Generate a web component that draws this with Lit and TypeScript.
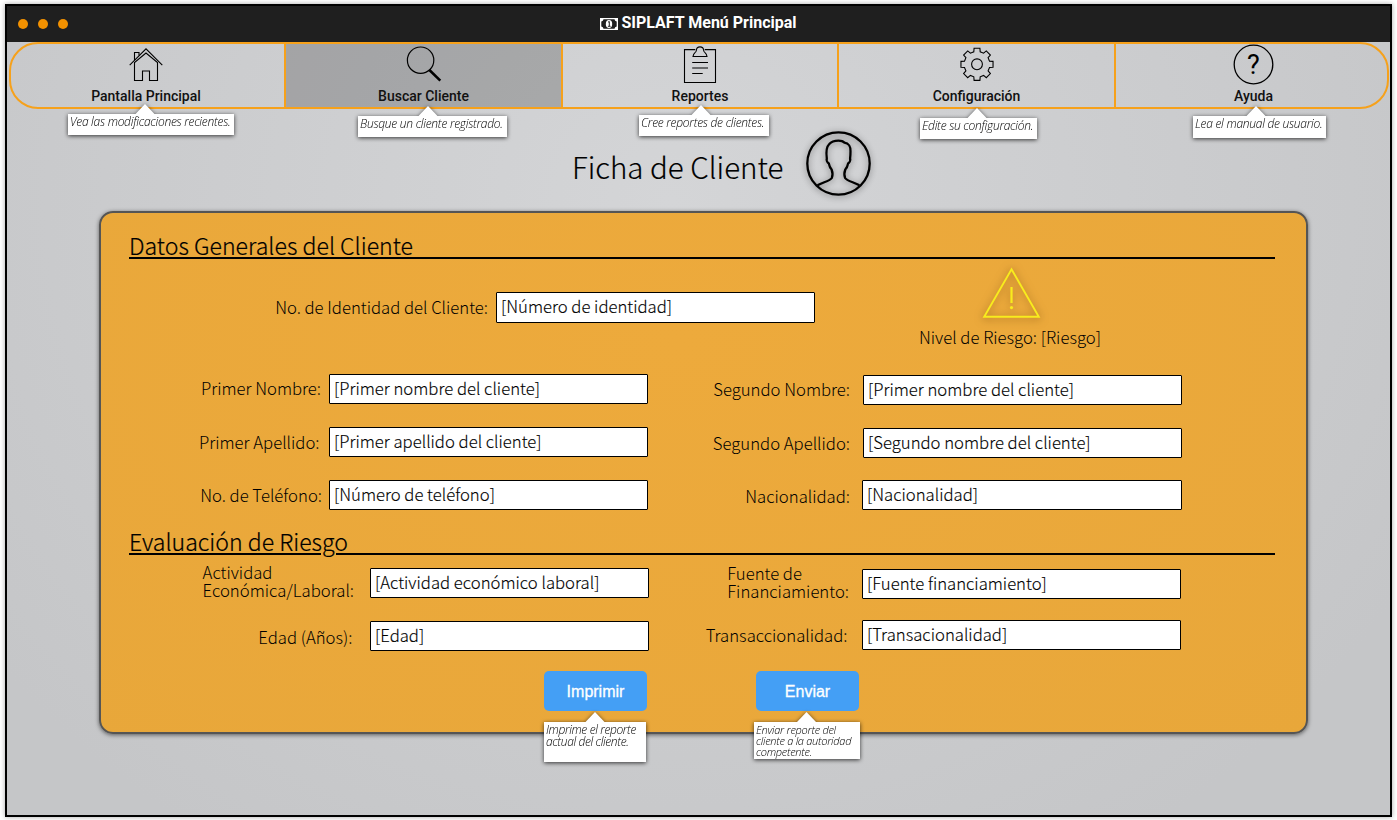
import { LitElement, html, svg, css, TemplateResult } from "lit";
import { customElement, property } from "lit/decorators.js";

function gearPath(cx: number, cy: number, inner: number, outer: number): string {
  const pts: string[] = [];
  for (let i = 0; i < 8; i++) {
    const mid = (i * Math.PI) / 4 - Math.PI / 2;
    const corners: [number, number][] = [
      [inner, -0.25],
      [outer, -0.18],
      [outer, 0.18],
      [inner, 0.25],
    ];
    for (const [r, d] of corners) {
      pts.push(`${(cx + r * Math.cos(mid + d)).toFixed(2)} ${(cy + r * Math.sin(mid + d)).toFixed(2)}`);
    }
  }
  return `M${pts.join("L")}Z`;
}

const icons: Record<string, TemplateResult> = {
  home: svg`<g fill="none" stroke="#000" stroke-width="1.1">
    <path d="M3.7 22.1 20 5.9l16.300 16.200"/><path d="M8.500 19.500V37.500h8v-9.500h7v9.500h8V19.500L20 10Z"/>
    <path d="M8.500 17v-7.500h4.500v3"/></g>`,
  search: svg`<circle cx="16.600" cy="17.200" r="13.200" fill="none" stroke="#000" stroke-width="1.2"/>
    <path d="m25.400 27 10.900 10.600" stroke="#000" stroke-width="2.6"/>`,
  report: svg`<g fill="none" stroke="#000" stroke-width="1.1"><path d="M15.3 6.600H4.5v32.900h31V6.600H24.7"/>
    <path d="M13 13.500q.4-2.600 2-3.900 1.200-.8 1.400-2.400c.2-4.500 7-4.500 7.200 0q.2 1.600 1.400 2.400 1.600 1.300 2 3.900Z"/>
    <path d="M12.200 19.500h15.800M12.200 25h15.800M12.200 30.500h10.500" stroke-width="1.200"/></g>`,
  gear: svg`<g fill="none" stroke="#000" stroke-width="1.1"><path d="${gearPath(20, 21.3, 12.9, 16.3)}"/>
    <circle cx="20" cy="21.3" r="5.4"/></g>`,
  help: svg`<circle cx="19.500" cy="21.500" r="19.300" fill="none" stroke="#000" stroke-width="1.300"/>
    <text x="19.500" y="31" text-anchor="middle" font-family="Roboto" font-size="27" font-weight="400">?</text>`,
};

@customElement("hint-bubble")
class HintBubble extends LitElement {
  @property({ type: Number }) tip = 0;
  static styles = css`
    :host { display: block; box-sizing: border-box; background: #fff; color: #000;
      font: italic 300 12px/12px "Open Sans", sans-serif; letter-spacing: -0.27px; padding: 2px 0 0 2px;
      white-space: nowrap; filter: drop-shadow(0 1px 2px rgba(0, 0, 0, 0.75)); }
    .arrow { position: absolute; top: -10px; width: 20px; height: 10.5px; background: #fff;
      clip-path: polygon(50% 0, 100% 100%, 0 100%); }
  `;
  render() {
    return html`<span class="arrow" style="left:${this.tip - 10}px"></span><slot></slot>`;
  }
}

@customElement("form-field")
class FormField extends LitElement {
  @property() label = "";
  @property() value = "";
  static styles = css`
    :host { display: flex; height: 30px; color: #000; font: 300 16.7px/18px "Noto Sans CJK JP", sans-serif; }
    .label { box-sizing: border-box; width: var(--label, 200px); padding-right: var(--gap, 8px);
      display: flex; justify-content: flex-end; align-items: center; white-space: pre; flex: none;
      padding-top: var(--drop, 0px); padding-bottom: var(--lift, 2px); }
    .box { box-sizing: border-box; flex: none; width: var(--box, 319px); background: #fff; border: 1px solid #000;
      border-radius: 1px; padding: 0 0 var(--rise, 2px) 4px; display: flex; align-items: center;
      white-space: nowrap; -webkit-text-stroke: 0.12px #000; }
  `;
  render() {
    return html`<div class="label"><span>${this.label}</span></div><div class="box"><span>${this.value}</span></div>`;
  }
}

@customElement("app-root")
class AppRoot extends LitElement {
  static styles = css`
    :host { display: block; box-sizing: border-box; width: 1397px; height: 820px; padding: 4px 0 0 5px;
      background: #fff; overflow: hidden; }
    .window { box-sizing: border-box; width: 1387px; height: 813px; border: 2px solid #000;
      box-shadow: 0 0 5px rgba(0, 0, 0, 0.35);
      background: radial-gradient(ellipse 850px 760px at 48% 24%, #d4d5d7, #c5c6c8); }
    .titlebar { height: 36px; background: #1f1f1f; display: grid; grid-template-columns: 1fr auto 1fr;
      align-items: center; }
    .dots { display: flex; gap: 10px; padding-left: 11px; }
    .dot { width: 10px; height: 10px; border-radius: 50%; background: #f29100; }
    .title { display: flex; align-items: center; gap: 3px; color: #fff; padding-bottom: 2px;
      font: 700 16px/20px Roboto, sans-serif; }
    .title svg { margin-top: 1px; }
    .nav { box-sizing: border-box; width: 1380px; height: 67px; margin-left: 2px; border: 2px solid #f6a11b;
      border-radius: 29px; display: grid; grid-template-columns: 273px 277px 276px 277px 273px; }
    .tab { position: relative; box-sizing: border-box; display: flex; flex-direction: column; align-items: center;
      font: 500 14px/16px Roboto, sans-serif; color: #111; }
    .tab:first-child { padding-right: 3px; }
    .tab:last-child { padding-left: 4px; }
    .tab + .tab { border-left: 2px solid #f6a11b; }
    .tab.active { background: rgba(0, 0, 0, 0.2); }
    .tab svg { width: 40px; height: 40px; margin-top: -1px; overflow: visible; }
    .tab span { margin-top: 5px; }
    .hint { position: absolute; z-index: 2; }
    .h1 { left: 57px; top: 70px; width: 166px; height: 21px; }
    .h2 { left: 72px; top: 72px; width: 149px; height: 21px; }
    .h3 { left: 76px; top: 71px; width: 130px; height: 21px; }
    .h4 { left: 81px; top: 74px; width: 117px; height: 21px; }
    .h5 { left: 77px; top: 72px; width: 133px; height: 22px; }
    .header { height: 102px; display: flex; justify-content: flex-start; padding: 22px 0 0 565px;
      box-sizing: border-box; }
    .header h1 { margin: 12px 0 0; width: 234px; font: 300 29.5px/46px "Noto Sans CJK JP", sans-serif; color: #000;
      white-space: nowrap; -webkit-text-stroke: 0.15px #000; }
    .header svg { width: 65px; height: 65px; overflow: visible; filter: drop-shadow(0 1px 3px rgba(0, 0, 0, 0.45)); }
    .panel { box-sizing: border-box; width: 1209px; height: 523px; margin-left: 92px; padding: 0 31px 0 28px;
      border: 2px solid #555; border-radius: 14px; box-shadow: 0 1px 4px rgba(0, 0, 0, 0.55);
      background: radial-gradient(ellipse 900px 550px at 48% 25%, #edaa3c, #e8a73a); }
    h2 { box-sizing: border-box; width: 1146px; height: 46px; margin: 0; display: flex; align-items: flex-end;
      font: 300 23.1px/28px "Noto Sans CJK JP", sans-serif; color: #000; white-space: nowrap;
      -webkit-text-stroke: 0.2px #000; }
    h2 span { text-decoration: underline 2px; text-underline-offset: 2px; }
    h2::after { content: ""; flex: 1; height: 2px; background: #000; }
    h2.second { height: 45px; }
    .top { height: 115px; display: flex; }
    .ident { --label: 367px; height: 31px; margin-top: 33px; --lift: 1px; --rise: 3px; }
    .risk { width: 200px; margin-left: 95px; display: flex; flex-direction: column; align-items: center;
      font: 300 16.7px/20px "Noto Sans CJK JP", sans-serif; color: #000; }
    .risk svg { width: 60px; height: 54px; margin: 7px 0 7px 2px; overflow: visible;
      filter: drop-shadow(0 1px 4px rgba(90, 50, 0, 0.6)); }
    .columns { display: flex; }
    .left, .right { display: flex; flex-direction: column; gap: 23px; width: 519px; }
    .right { width: 534px; --label: 215px; --gap: 13px; padding-top: 1px; }
    .wide { --label: 214px; --box: 320px; --gap: 12px; margin-top: -1px; }
    .second-left { padding-top: 13px; --label: 241px; --box: 279px; --gap: 16px; width: 520px; }
    .second-right { padding-top: 14px; gap: 21px; --label: 213px; }
    .level { --lift: 0px; }
    .drop { --drop: 3px; }
    .pair { --lift: 4px; }
    .near { --gap: 7px; }
    .inset { --gap: 9.5px; }
    .far { --gap: 17.5px; }
    .apart { --gap: 14.5px; --lift: 0px; }
    .actions { display: flex; gap: 109px; padding: 20px 0 0 415px; }
    .button { position: relative; width: 103px; height: 40px; border-radius: 5px; background: #449ff5; color: #fff;
      font: 16px/42px "Liberation Sans", sans-serif; text-align: center; -webkit-text-stroke: 0.3px #fff; }
    .button .hint { -webkit-text-stroke: 0; text-align: left; }
    .h6 { left: 0; top: 51px; width: 102px; height: 40px; letter-spacing: -0.38px; }
    .h7 { left: -2px; top: 51px; width: 106px; height: 37px; font-size: 11px; line-height: 11px; }
  `;

  private tab(icon: string, label: string, n: number, tip: number, hint: string) {
    return html`<div class="tab ${n === 2 ? "active" : ""}">
      <svg viewBox="0 0 40 40">${icons[icon]}</svg><span>${label}</span>
      <hint-bubble class="hint h${n}" .tip=${tip}>${hint}</hint-bubble>
    </div>`;
  }

  render() {
    return html`<div class="window">
      <div class="titlebar">
        <div class="dots"><i class="dot"></i><i class="dot"></i><i class="dot"></i></div>
        <div class="title">
          <svg width="18" height="12" viewBox="0 0 18 12"><path fill="#fff" d="M0 0h18v12H0z"/>
            <path fill="#1f1f1f" d="M3.500 1.200h11q.2 2 2.200 2.200v5.200q-2 .2-2.200 2.200h-11q-.2-2-2.200-2.200V3.400q2-.2 2.200-2.200z"/>
            <ellipse cx="9" cy="6" rx="3.200" ry="4.100" fill="#fff"/><path d="M8 4.200l1.300-.7v4.600M7.900 8.300h2.700" stroke="#1f1f1f" fill="none"/></svg>
          <span>SIPLAFT Menú Principal</span>
        </div>
        <div></div>
      </div>
      <div class="nav">
        ${this.tab("home", "Pantalla Principal", 1, 77, "Vea las modificaciones recientes.")}
        ${this.tab("search", "Buscar Cliente", 2, 70, "Busque un cliente registrado.")}
        ${this.tab("report", "Reportes", 3, 62, "Cree reportes de clientes.")}
        ${this.tab("gear", "Configuración", 4, 57, "Edite su configuración.")}
        ${this.tab("help", "Ayuda", 5, 63, "Lea el manual de usuario.")}
      </div>
      <div class="header">
        <h1>Ficha de Cliente</h1>
        <svg viewBox="0 0 65 65"><g fill="none" stroke="#000" stroke-width="2.300">
          <circle cx="32.500" cy="32.500" r="31.200"/>
          <path d="M11.500 54.300c5-3 12.500-4.300 14.300-7.300.9-2 .7-6-.2-8.500-1.600-1.600-2.300-3.600-2.800-6-1.600-1-2.600-3.500-2-5.200-.8-6-.4-11.500 2.500-14.300 2-2.500 5.600-3.400 9.200-3.400 3 0 4.600.6 5.800 2 4.600.4 6.400 4.500 6.200 8.500 0 3-.1 5-.4 7.200.6 1.700-.4 4.200-2 5.200-.5 2.400-1.200 4.400-2.800 6-.9 2.500-1.100 6.500-.2 8.500 1.800 3 9.300 4.300 14.300 7.300"/>
        </g></svg>
      </div>
      <div class="panel">
        <h2><span>Datos Generales del Cliente</span></h2>
        <div class="top">
          <form-field class="ident" label="No. de Identidad del Cliente:" value="[Número de identidad]"></form-field>
          <div class="risk">
            <svg viewBox="0 0 60 54"><path d="M30.500 3.300 57.800 50.700H3.200Z" fill="none" stroke="#f8ec1d" stroke-width="1.900"/>
              <path d="M30.500 21v16" stroke="#f8ec1d" stroke-width="2.200"/><circle cx="30.500" cy="41.600" r="1.600" fill="#f8ec1d"/></svg>
            <span>Nivel de Riesgo: [Riesgo]</span>
          </div>
        </div>
        <div class="columns">
          <div class="left">
            <form-field label="Primer Nombre:" value="[Primer nombre del cliente]"></form-field>
            <form-field class="level inset" label="Primer Apellido:" value="[Primer apellido del cliente]"></form-field>
            <form-field class="level near" label="No. de Teléfono:" value="[Número de teléfono]"></form-field>
          </div>
          <div class="right">
            <form-field label="Segundo Nombre:" value="[Primer nombre del cliente]"></form-field>
            <form-field class="level" label="Segundo Apellido:" value="[Segundo nombre del cliente]"></form-field>
            <form-field class="wide drop" label="Nacionalidad:" value="[Nacionalidad]"></form-field>
          </div>
        </div>
        <h2 class="second"><span>Evaluación de Riesgo</span></h2>
        <div class="columns">
          <div class="left second-left">
            <form-field class="pair" label=${"Actividad\nEconómica/Laboral:"} value="[Actividad económico laboral]"></form-field>
            <form-field class="drop far" label="Edad (Años):" value="[Edad]"></form-field>
          </div>
          <div class="right second-right">
            <form-field class="pair" label=${"Fuente de\nFinanciamiento:"} value="[Fuente financiamiento]"></form-field>
            <form-field class="apart" label="Transaccionalidad:" value="[Transacionalidad]"></form-field>
          </div>
        </div>
        <div class="actions">
          <div class="button">Imprimir<hint-bubble class="hint h6" .tip=${51}>Imprime el reporte<br />actual del cliente.</hint-bubble></div>
          <div class="button">Enviar<hint-bubble class="hint h7" .tip=${52.5}>Enviar reporte del<br />cliente a la autoridad<br />competente.</hint-bubble></div>
        </div>
      </div>
    </div>`;
  }
}
